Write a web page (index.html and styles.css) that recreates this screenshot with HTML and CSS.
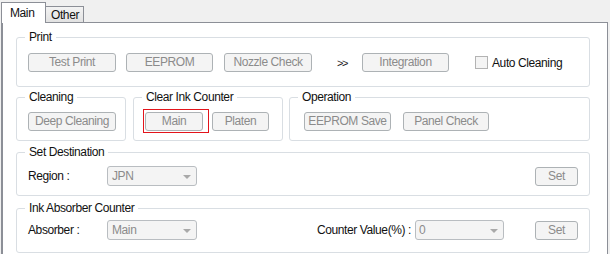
FILE: index.html
```html
<!DOCTYPE html>
<html lang="en">
<head>
    <meta charset="UTF-8">
    <title>Maintenance</title>
    <link rel="stylesheet" href="styles.css">
</head>
<body>
    <div class="tabs">
        <div class="tab tab-active">Main</div>
        <div class="tab tab-other">Other</div>
    </div>

    <div class="panel">
        <div class="group group-print">
            <div class="group-title">Print</div>
            <div class="row row-print">
                <button class="btn w88" disabled>Test Print</button>
                <button class="btn w87 ml10" disabled>EEPROM</button>
                <button class="btn w88 ml11" disabled>Nozzle Check</button>
                <span class="arrows">&gt;&gt;</span>
                <button class="btn w87 ml13" disabled>Integration</button>
                <span class="check"></span>
                <span class="check-label">Auto Cleaning</span>
            </div>
        </div>

        <div class="group-row">
            <div class="group group-cleaning">
                <div class="group-title">Cleaning</div>
                <div class="row row-small">
                    <button class="btn w88" disabled>Deep Cleaning</button>
                </div>
            </div>
            <div class="group group-ink">
                <div class="group-title">Clear Ink Counter</div>
                <div class="row row-small">
                    <button class="btn w58 btn-focus" disabled>Main</button>
                    <button class="btn w57 ml9" disabled>Platen</button>
                </div>
            </div>
            <div class="group group-operation">
                <div class="group-title">Operation</div>
                <div class="row row-small row-operation">
                    <button class="btn w87" disabled>EEPROM Save</button>
                    <button class="btn w86 ml12" disabled>Panel Check</button>
                </div>
            </div>
        </div>

        <div class="group group-dest">
            <div class="group-title">Set Destination</div>
            <div class="row row-field row-dest">
                <span class="field-label">Region :</span>
                <div class="combo w90"><span>JPN</span><span class="combo-arrow"></span></div>
                <button class="btn btn-set" disabled>Set</button>
            </div>
        </div>

        <div class="group group-absorber">
            <div class="group-title">Ink Absorber Counter</div>
            <div class="row row-field row-absorber">
                <span class="field-label">Absorber :</span>
                <div class="combo w90"><span>Main</span><span class="combo-arrow"></span></div>
                <span class="field-label field-label-wide">Counter Value(%) :</span>
                <div class="combo w89 combo-value"><span>0</span><span class="combo-arrow"></span></div>
                <button class="btn btn-set" disabled>Set</button>
            </div>
        </div>
    </div>
</body>
</html>
```

FILE: styles.css
```css
* {
    box-sizing: border-box;
    margin: 0;
    padding: 0;
}

body {
    font-family: "Liberation Sans", Arial, sans-serif;
    font-size: 12px;
    letter-spacing: -0.4px;
    color: #111;
    background-color: #f0f0f0;
    width: 610px;
    height: 254px;
    overflow: hidden;
}

/* tab strip */
.tabs {
    display: flex;
    align-items: flex-end;
    height: 22px;
    padding-left: 1px;
}

.tab {
    border: 1px solid #8c8f97;
    border-bottom: none;
    line-height: 14px;
}

.tab-active {
    width: 45px;
    height: 21px;
    padding: 3px 0 0 8px;
    margin-bottom: -1px;
    background-color: #fff;
    position: relative;
    z-index: 1;
}

.tab-other {
    width: 39px;
    height: 16px;
    margin-left: -1px;
    padding: 1px 0 0 5px;
    background: linear-gradient(#f3f3f3, #e2e2e2);
}

.panel {
    width: 607px;
    height: 232px;
    margin-left: 1px;
    padding: 14px 0 0 13px;
    background-color: #fff;
    border: 1px solid #8c8f97;
    border-left-width: 2px;
    border-bottom: none;
}

/* group boxes */
.group {
    border: 1px solid #d9dee3;
    border-radius: 3px;
    width: 574px;
}

.group-title {
    width: fit-content;
    margin: -8px 0 0 8px;
    padding: 0 4px;
    line-height: 14px;
    background-color: #fff;
}

.group-print {
    height: 50px;
}

.group-row {
    display: flex;
    margin-top: 10px;
}

.group-cleaning,
.group-ink,
.group-operation {
    height: 44px;
}

.group-cleaning {
    width: 110px;
}

.group-ink {
    width: 150px;
    margin-left: 7px;
}

.group-operation {
    width: 301px;
    margin-left: 6px;
}

.group-dest {
    height: 44px;
    margin-top: 11px;
}

.group-absorber {
    height: 45px;
    margin-top: 12px;
}

.row {
    display: flex;
    align-items: center;
    padding-left: 11px;
}

.row-print {
    margin-top: 9px;
}

.row-small {
    margin-top: 8px;
}

.row-operation {
    padding-left: 14px;
}

.row-field {
    padding-right: 11px;
}

.row-dest {
    margin-top: 7px;
}

.row-absorber {
    margin-top: 5px;
}

/* controls */
.btn {
    height: 19px;
    font: inherit;
    letter-spacing: inherit;
    line-height: 17px;
    color: #8b8b8b;
    background-color: #f4f4f4;
    border: 1px solid #adb2b5;
    border-radius: 3px;
    text-align: center;
}

.btn-focus {
    position: relative;
}

.btn-focus::after {
    content: "";
    position: absolute;
    left: -3px;
    top: -4px;
    right: -7px;
    bottom: -3px;
    border: 1px solid #e3141b;
}

.btn-set {
    width: 43px;
    margin-left: auto;
}

.w57 { width: 57px; }
.w58 { width: 58px; }
.w86 { width: 86px; }
.w87 { width: 87px; }
.w88 { width: 88px; }
.w89 { width: 89px; }
.w90 { width: 90px; }

.ml9 { margin-left: 9px; }
.ml10 { margin-left: 10px; }
.ml11 { margin-left: 11px; }
.ml12 { margin-left: 12px; }
.ml13 { margin-left: 13px; }

.arrows {
    width: 12px;
    margin-left: 25px;
    font-size: 11px;
    letter-spacing: -1.5px;
    color: #222;
}

.check {
    width: 13px;
    height: 13px;
    margin-left: 26px;
    background-color: #f4f4f4;
    border: 1px solid #b3b3b3;
}

.check-label {
    margin-left: 4px;
}

.field-label {
    width: 79px;
}

.field-label-wide {
    width: 98px;
    margin-left: 120px;
}

.combo {
    display: flex;
    align-items: center;
    justify-content: space-between;
    height: 20px;
    padding-left: 4px;
    color: #8b8b8b;
    background-color: #f4f4f4;
    border: 1px solid #b9bdc1;
    border-radius: 3px;
}

.combo-value {
    padding-left: 3px;
}

.combo-arrow {
    width: 0;
    height: 0;
    margin: 2px 5px 0 0;
    border-left: 4px solid transparent;
    border-right: 4px solid transparent;
    border-top: 4px solid #a9a9a9;
}
```
